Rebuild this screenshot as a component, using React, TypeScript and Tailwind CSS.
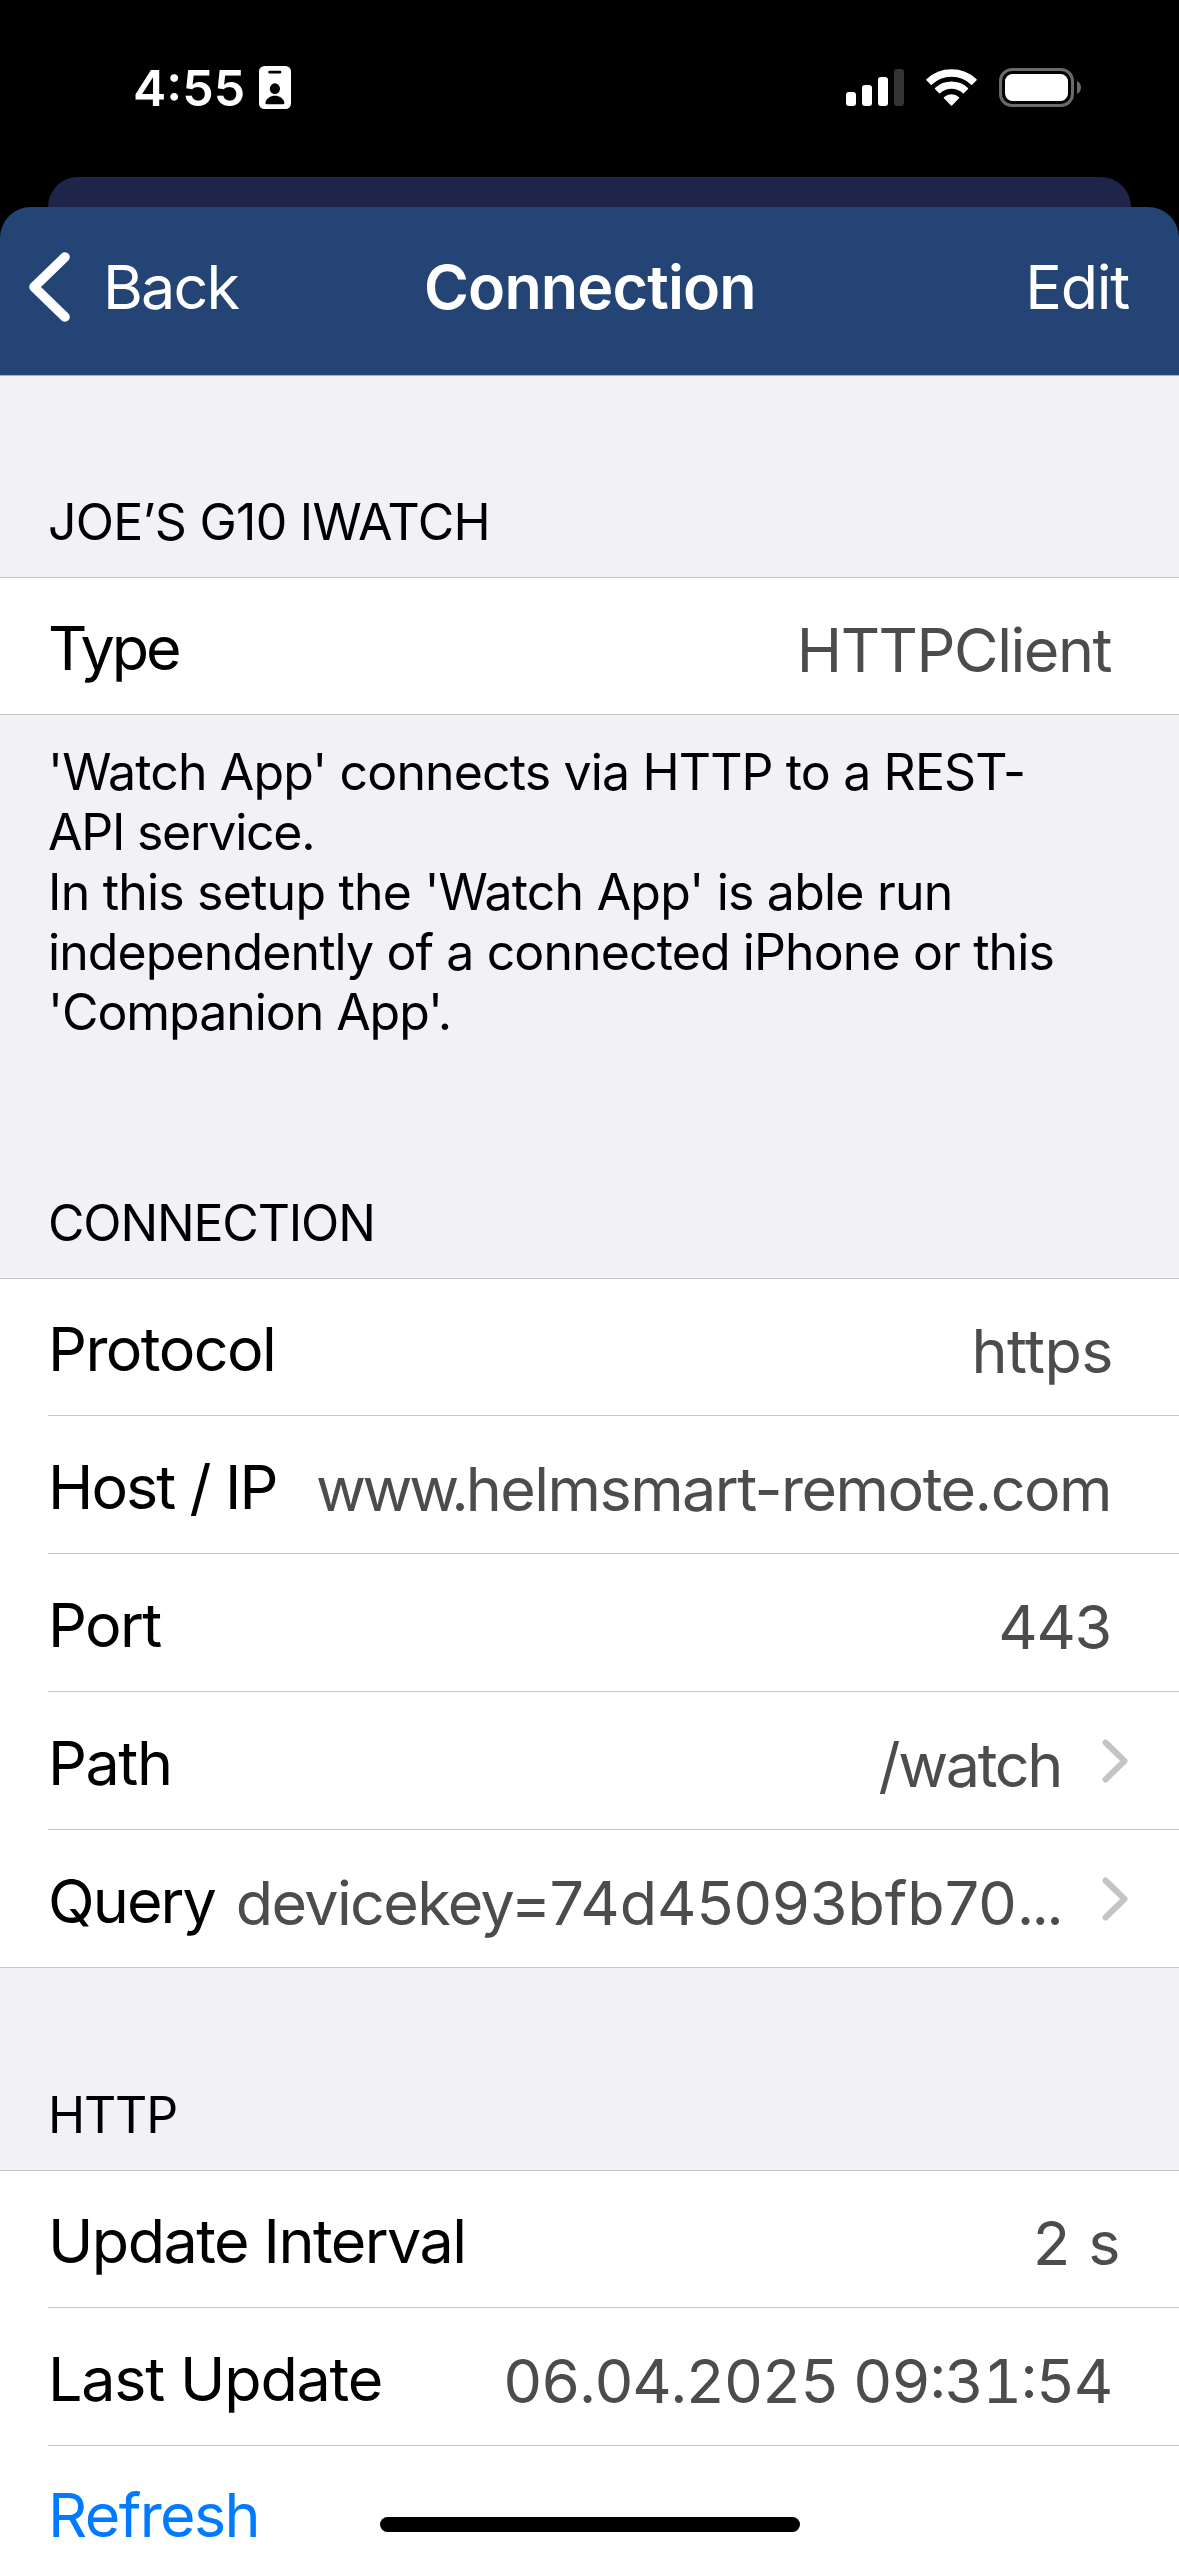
import type { ReactNode } from 'react';
import clsx from 'clsx';

function StatusBar() {
  return (
    <div className="flex h-[175px] items-center pr-[98px] pl-[133px] text-white">
      <span className="w-[126px] pt-px text-[50px] leading-[60px] font-semibold [font-feature-settings:'calt']">
        4:55
      </span>
      <svg width="32" height="43" viewBox="0 0 32 43">
        <rect width="32" height="43" rx="5.5" fill="#fff" />
        <rect x="9.3" y="4.8" width="13" height="2.7" rx="1.3" fill="#000" />
        <ellipse cx="15.9" cy="22.7" rx="5.1" ry="5.4" fill="#000" />
        <path d="M7.8 38.3c-1.2 0-1.6-.9-1.3-2C7.6 32.4 11.3 29.8 15.9 29.8s8.3 2.6 9.4 6.5c.3 1.1-.1 2-1.3 2Z" fill="#000" />
      </svg>
      <div className="ml-auto flex items-center gap-[22px]">
        <svg width="58" height="37" viewBox="0 0 58 37" fill="#fff">
          <rect y="23" width="10" height="14" rx="3" />
          <rect x="16" y="16" width="10" height="21" rx="3" />
          <rect x="32" y="8" width="10" height="29" rx="3" />
          <rect x="48" width="10" height="37" rx="3" fill="#343434" />
        </svg>
        <svg width="51" height="37" viewBox="0 0 51 37" fill="#fff" stroke="#fff" strokeWidth="1.4" strokeLinejoin="round">
          <path d="M.9 10.7A36 36 0 0 1 50.1 10.7L45.7 15.2A29 29 0 0 0 5.3 15.2Z" />
          <path d="M9.5 19.6A23.5 23.5 0 0 1 41.5 19.6L37.4 23.8A17.3 17.3 0 0 0 13.6 23.8Z" />
          <path d="M18.4 28.8A10.5 10.5 0 0 1 32.6 28.8L25.5 36.1Z" />
        </svg>
        <svg width="82" height="39" viewBox="0 0 82 39">
          <rect x="1.5" y="1.5" width="72" height="36" rx="11.5" fill="none" stroke="#6a6a6a" strokeWidth="3" />
          <rect x="6" y="6" width="63" height="27" rx="7.5" fill="#fff" />
          <path d="M78 13c2.4 1 4 3.5 4 6.5s-1.6 5.5-4 6.5Z" fill="#6a6a6a" />
        </svg>
      </div>
    </div>
  );
}

function NavBar() {
  return (
    <div className="grid h-[169px] grid-cols-[424px_1fr_auto] rounded-t-[31px] border-b border-[#a6b0c6] bg-[#234475] pt-[43px] pr-[50px] text-[61px] leading-[74px] whitespace-nowrap text-white">
      <button className="flex items-start pl-[28px] text-left">
        <svg width="42" height="70" viewBox="0 0 42 70" className="mt-[2px]">
          <path d="M37 5 6 35l31 30" fill="none" stroke="#fff" strokeWidth="9.6" strokeLinecap="round" strokeLinejoin="round" />
        </svg>
        <span className="pl-[33px] tracking-[-1.84px]">Back</span>
      </button>
      <h1 className="font-semibold tracking-[-0.85px]">Connection</h1>
      <button className="self-start tracking-[-1.26px]">Edit</button>
    </div>
  );
}

function SectionHeader({ children, className }: { children: ReactNode; className: string }) {
  return <h2 className={clsx('pb-[25px] pl-12 text-[50px] leading-[60px] text-black', className)}>{children}</h2>;
}

function Section({ children }: { children: ReactNode }) {
  return <section className="bg-white shadow-[inset_0_1px_0_#c6c6c8]">{children}</section>;
}

type RowProps = {
  label: string;
  labelClass: string;
  value: ReactNode;
  valueClass: string;
  chevron?: boolean;
  last?: boolean;
};

function Row({ label, labelClass, value, valueClass, chevron, last }: RowProps) {
  return (
    <div
      className={clsx(
        'flex h-[138px] items-start justify-between border-b border-[#c6c6c8] text-[61px] leading-[74px] whitespace-nowrap',
        last ? 'pl-12' : 'ml-12',
      )}
    >
      <span className={clsx('pt-[34px] text-black', labelClass)}>{label}</span>
      <div className="flex items-start">
        <span className={clsx('pt-9 text-[#4c4c4c]', valueClass)}>{value}</span>
        {chevron && (
          <svg width="28" height="46" viewBox="0 0 28 46" className="mt-[46px] mr-[50px]">
            <path d="M4.5 4.5 23.5 23 4.5 41.5" fill="none" stroke="#c4c4c6" strokeWidth="6" strokeLinecap="round" strokeLinejoin="round" />
          </svg>
        )}
      </div>
    </div>
  );
}

export default function App() {
  return (
    <div className="relative h-[2556px] w-[1179px] overflow-hidden bg-black font-['Inter',sans-serif]">
      <StatusBar />
      <div className="mx-12 mt-[2px] h-[30px] rounded-t-[30px] bg-[#1f254a]" />
      <NavBar />
      <main className="h-[2180px] bg-[#f2f1f6]">
        <SectionHeader className="pt-[116px] tracking-[-0.75px]">JOE’S G10 IWATCH</SectionHeader>
        <Section>
          <Row label="Type" labelClass="tracking-[-3.07px]" value="HTTPClient" valueClass="mr-[68px] tracking-[-1.45px]" last />
        </Section>
        <div className="pt-[27px] pl-12 text-[50px] leading-[60px] whitespace-nowrap text-black">
          <p className="tracking-[-0.86px]">'Watch App' connects via HTTP to a REST-</p>
          <p className="tracking-[-1.25px]">API service.</p>
          <p className="tracking-[-0.8px]">In this setup the 'Watch App' is able run</p>
          <p className="tracking-[-0.89px]">independently of a connected iPhone or this</p>
          <p className="tracking-[-1.05px]">'Companion App'.</p>
        </div>
        <SectionHeader className="pt-[151px] tracking-[-1.16px]">CONNECTION</SectionHeader>
        <Section>
          <Row label="Protocol" labelClass="tracking-[-1.54px]" value="https" valueClass="mr-[66px] tracking-[-0.51px]" />
          <Row
            label="Host / IP"
            labelClass="tracking-[-1.92px]"
            value={
              <>
                <span className="tracking-[-3.3px]">www.</span>helmsmart-remote.com
              </>
            }
            valueClass="mr-[68px] tracking-[-1.5px]"
          />
          <Row label="Port" labelClass="tracking-[-1.64px]" value="443" valueClass="mr-[68px] tracking-[-1.26px]" />
          <Row label="Path" labelClass="tracking-[-1.42px]" value="/watch" valueClass="mr-[40px] tracking-[-2.33px]" chevron />
          <Row
            label="Query"
            labelClass="tracking-[-1.9px]"
            value={
              <>
                <span className="tracking-[-1.63px]">devicekey=</span>
                74d45093bfb70
                <span className="tracking-[-2.8px]">...</span>
              </>
            }
            valueClass="mr-[40px] tracking-[-0.02px]"
            chevron
            last
          />
        </Section>
        <SectionHeader className="pt-[117px] tracking-[-1.17px]">HTTP</SectionHeader>
        <Section>
          <Row label="Update Interval" labelClass="tracking-[-1.55px]" value="2 s" valueClass="mr-[58px] tracking-[0.5px]" />
          <Row
            label="Last Update"
            labelClass="tracking-[-1.2px]"
            value="06.04.2025 09:31:54"
            valueClass="mr-[67px] tracking-[-1.4px] [font-feature-settings:'calt','tnum']"
          />
          <button className="block h-[138px] w-full pt-8 pl-12 text-left text-[61px] leading-[74px] tracking-[-1.6px] text-[#007aff]">
            <span className="block h-[106px]">Refresh</span>
          </button>
        </Section>
      </main>
      <div className="absolute top-[2517px] left-[380px] h-[15px] w-[420px] rounded-full bg-black" />
    </div>
  );
}
